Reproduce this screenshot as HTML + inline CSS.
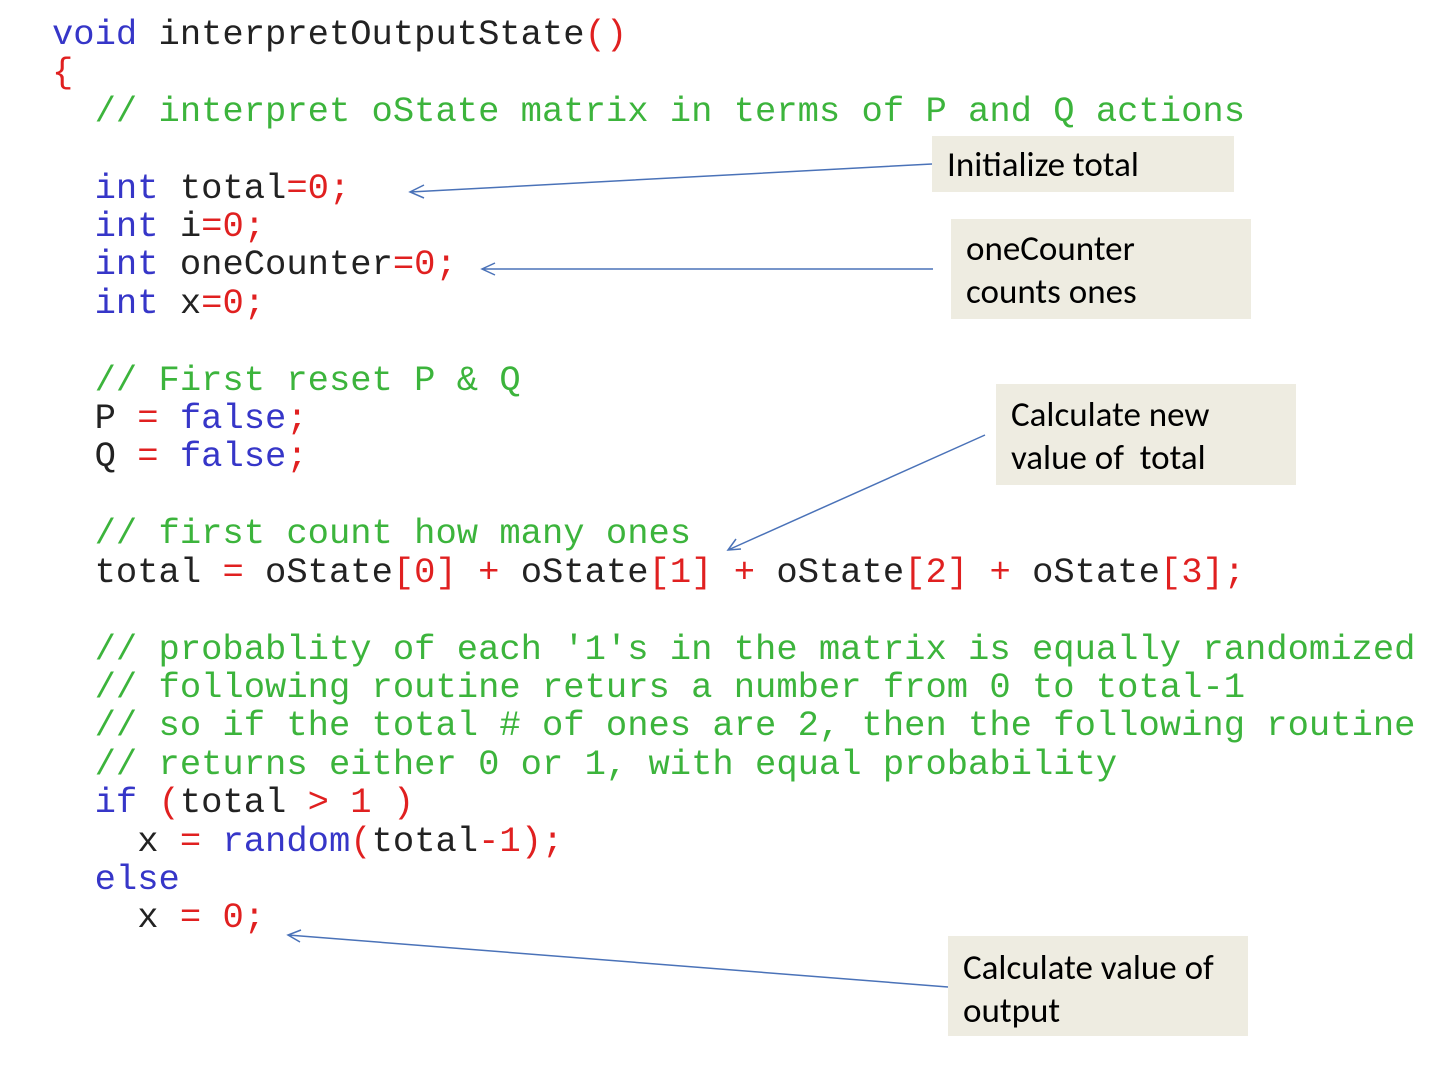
<!DOCTYPE html>
<html><head><style>
body{margin:0;width:1440px;height:1080px;background:#fff;position:relative;overflow:hidden}
.c{position:absolute;left:52px;font-family:"Liberation Mono",monospace;font-size:35.5px;line-height:38.4px;white-space:pre;color:#222;top:16px}
.k{color:#3636c8}.g{color:#3cb43c}.r{color:#e02020}
.b{position:absolute;background:#eeece1;font-family:"Carlito","Liberation Sans",sans-serif;font-size:35px;line-height:43px;color:#000;box-sizing:border-box;padding-left:15px}
</style></head><body>
<div class="c"><span class="k">void</span> interpretOutputState<span class="r">()</span>
<span class="r">{</span>
  <span class="g">// interpret oState matrix in terms of P and Q actions</span>

  <span class="k">int</span> total<span class="r">=0;</span>
  <span class="k">int</span> i<span class="r">=0;</span>
  <span class="k">int</span> oneCounter<span class="r">=0;</span>
  <span class="k">int</span> x<span class="r">=0;</span>

  <span class="g">// First reset P &amp; Q</span>
  P <span class="r">=</span> <span class="k">false</span><span class="r">;</span>
  Q <span class="r">=</span> <span class="k">false</span><span class="r">;</span>

  <span class="g">// first count how many ones</span>
  total <span class="r">=</span> oState<span class="r">[0]</span> <span class="r">+</span> oState<span class="r">[1]</span> <span class="r">+</span> oState<span class="r">[2]</span> <span class="r">+</span> oState<span class="r">[3];</span>

  <span class="g">// probablity of each '1's in the matrix is equally randomized</span>
  <span class="g">// following routine returs a number from 0 to total-1</span>
  <span class="g">// so if the total # of ones are 2, then the following routine</span>
  <span class="g">// returns either 0 or 1, with equal probability</span>
  <span class="k">if</span> <span class="r">(</span>total <span class="r">&gt; 1 )</span>
    x <span class="r">=</span> <span class="k">random</span><span class="r">(</span>total<span class="r">-1);</span>
  <span class="k">else</span>
    x <span class="r">=</span> <span class="r">0;</span></div>
<div class="b" style="left:932px;top:136px;width:302px;height:56px;padding-top:8px">Initialize total</div>
<div class="b" style="left:951px;top:219px;width:300px;height:100px;padding-top:9px">oneCounter<br>counts ones</div>
<div class="b" style="left:996px;top:384px;width:300px;height:101px;padding-top:10px">Calculate new<br>value of&nbsp; total</div>
<div class="b" style="left:948px;top:936px;width:300px;height:100px;padding-top:11px">Calculate value of<br>output</div>
<svg width="1440" height="1080" style="position:absolute;left:0;top:0" fill="none" stroke="#4a72b8" stroke-width="1.5">
<path d="M932 164L410 192M424 185L410 192L424 198"/>
<path d="M933 269L482 269M495 263L482 269L495 275"/>
<path d="M985 435L728 550M736 539L728 550L741 549"/>
<path d="M948 987L288 935M301 930L288 935L300 942"/>
</svg>
</body></html>
